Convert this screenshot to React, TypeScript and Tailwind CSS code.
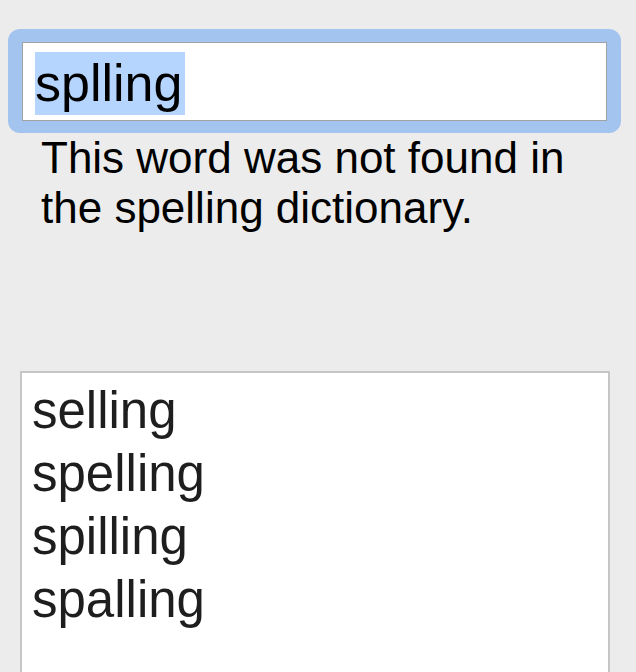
import React from 'react';

const suggestions = ['selling', 'spelling', 'spilling', 'spalling'];

const App: React.FC = () => {
  return (
    <div
      className="w-[636px] h-[672px] overflow-hidden bg-[#ececec] flex flex-col"
      style={{ fontFamily: '"Liberation Sans", Arial, sans-serif' }}
    >
      {/* focused word field */}
      <div className="mt-[29px] ml-[8px] w-[613px] h-[104px] rounded-[12px] bg-[#a3c4ee] pt-[13px] pl-[14px] pr-[14px] pb-[12px]">
        <div className="w-full h-full bg-white border border-[#a2a2a2] pl-[12px] pt-[9px]">
          <span className="inline-block w-[150px] h-[63px] leading-[63px] bg-[#b5d5fe] text-[52px] text-black">
            splling
          </span>
        </div>
      </div>

      <p className="ml-[41px] w-[580px] text-[44px] leading-[50px] text-black">
        This word was not found in
        <br />
        the spelling dictionary.
      </p>

      {/* suggestions list */}
      <div className="mt-[138px] ml-[20px] w-[590px] flex-1 bg-white border-2 border-b-0 border-[#c6c6c6] pt-[6px] pl-[10px]">
        <ul className="flex flex-col">
          {suggestions.map((s) => (
            <li key={s} className="text-[51px] leading-[63px] text-[#1e1e1e]">
              {s}
            </li>
          ))}
        </ul>
      </div>
    </div>
  );
};

export default App;
